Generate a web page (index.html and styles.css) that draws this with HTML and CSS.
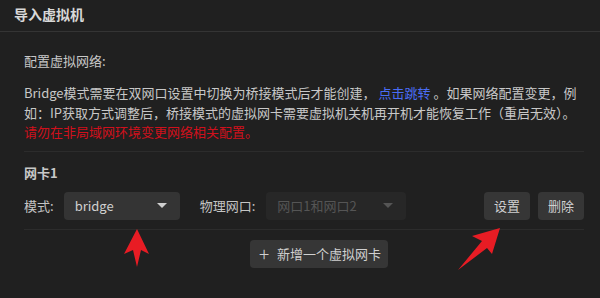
FILE: index.html
```html
<!DOCTYPE html>
<html lang="zh">
<head>
<meta charset="utf-8">
<link rel="stylesheet" href="styles.css">
</head>
<body>
<div class="dialog">
  <div class="header">导入虚拟机</div>
  <div class="body">
    <div class="section-label">配置虚拟网络:</div>
    <p class="desc">Bridge模式需要在双网口设置中切换为桥接模式后才能创建， <a class="link">点击跳转</a> 。如果网络配置变更，例如：IP获取方式调整后，桥接模式的虚拟网卡需要虚拟机关机再开机才能恢复工作（重启无效）。<br><span class="warn">请勿在非局域网环境变更网络相关配置。</span></p>
    <div class="nic">
      <div class="nic-title">网卡1</div>
      <div class="row">
        <span class="label">模式:</span>
        <div class="select mode"><span>bridge</span><span class="caret"></span></div>
        <span class="label phys">物理网口:</span>
        <div class="select disabled"><span>网口1和网口2</span><span class="caret"></span></div>
        <div class="spacer"></div>
        <button class="btn">设置</button>
        <button class="btn">删除</button>
      </div>
    </div>
    <div class="add-row">
      <button class="btn add"><span class="plus">+</span>新增一个虚拟网卡</button>
    </div>
  </div>
  <svg class="arrow arrow-up" width="30" height="42" viewBox="0 0 30 42">
    <polygon points="15,0 27,25 19,21 15,38 11,21 2,25" fill="#e81c24"/>
  </svg>
  <svg class="arrow arrow-diag" width="48" height="46" viewBox="0 0 48 46">
    <polygon points="44,1 36,27 31,21 2,43 26,14 16,9" fill="#e81c24"/>
  </svg>
</div>
</body>
</html>
```

FILE: styles.css
```css
html, body {
  margin: 0;
  padding: 0;
  background: #202020;
}
body {
  font-family: "Noto Sans CJK SC", "Noto Sans", sans-serif;
  font-size: 13px;
  color: #c8c8c8;
}
.dialog {
  position: relative;
  width: 600px;
  height: 298px;
  overflow: hidden;
  background: #202020;
}
.header {
  height: 32px;
  box-sizing: border-box;
  padding: 4px 14px 0;
  line-height: 20px;
  font-size: 14px;
  font-weight: 700;
  color: #d8d8d8;
  border-bottom: 1px solid #343434;
}
.body {
  padding: 19px 16px 0 24px;
}
.section-label {
  line-height: 20px;
}
.desc {
  margin: 12px 0 0;
  line-height: 19.5px;
  padding-bottom: 9px;
  border-bottom: 1px solid #2c2c2c;
}
.link {
  color: #4a6df5;
}
.warn {
  color: #d0101c;
}
.nic {
  padding-top: 11px;
  border-bottom: 1px solid #2c2c2c;
  padding-bottom: 9px;
}
.nic-title {
  line-height: 20px;
  font-weight: 700;
  color: #c8c8c8;
}
.row {
  margin-top: 9px;
  display: flex;
  align-items: center;
  height: 28px;
}
.label {
  color: #c4c4c4;
  margin-right: 10px;
}
.label.phys {
  margin-left: 20px;
  margin-right: 11px;
}
.select {
  height: 28px;
  box-sizing: border-box;
  border-radius: 4px;
  background: #343434;
  display: flex;
  align-items: center;
  justify-content: space-between;
  padding: 0 11px;
  color: #d0d0d0;
}
.select.mode {
  width: 116px;
}
.select.disabled {
  width: 140px;
  background: #272727;
  color: #555555;
}
.caret {
  width: 0;
  height: 0;
  border-left: 5px solid transparent;
  border-right: 5px solid transparent;
  border-top: 5px solid #cfcfcf;
  margin-right: 2px;
}
.select.disabled .caret {
  border-top-color: #555555;
}
.spacer {
  flex: 1;
}
.btn {
  font-family: inherit;
  font-size: 13px;
  height: 28px;
  width: 46px;
  border: none;
  border-radius: 4px;
  background: #363636;
  color: #d0d0d0;
  padding: 0;
  margin-left: 8px;
}
.add-row {
  display: flex;
  padding-top: 10px;
  padding-left: 226px;
}
.btn.add {
  width: 138px;
  margin-left: 0;
  display: flex;
  align-items: center;
  justify-content: center;
  gap: 8px;
  padding-left: 2px;
}
.plus {
  font-size: 19px;
  font-weight: 300;
  line-height: 1;
  margin-top: -2px;
}
.arrow {
  position: absolute;
}
.arrow-up {
  left: 122px;
  top: 229px;
}
.arrow-diag {
  left: 456px;
  top: 227px;
}
```
